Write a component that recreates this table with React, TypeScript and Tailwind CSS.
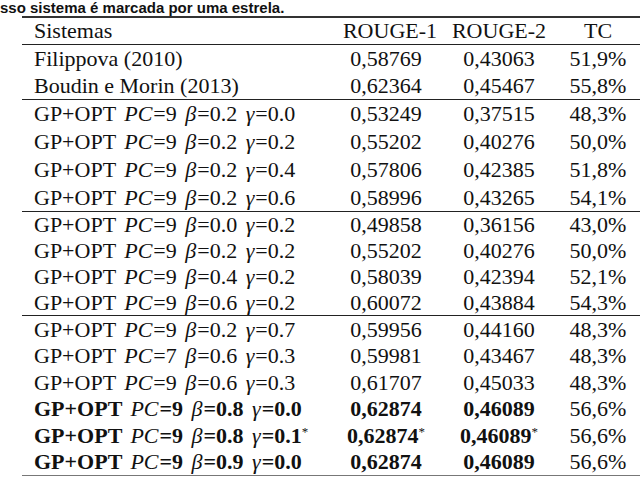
import React from "react";

type Cfg = { pc: string; b: string; g: string; bold?: boolean; star?: boolean };

const Star = () => (
  <span className="relative -top-[7px] text-[13px] font-normal leading-none">*</span>
);

const Sys = ({ pc, b, g, bold, star }: Cfg) => {
  const B = bold ? "font-bold" : "";
  return (
    <span className="whitespace-pre">
      <span className={B}>GP+OPT </span>
      <span className="italic font-normal ml-[3px] mr-[1px]">PC</span>
      <span className={B}>={pc} </span>
      <span className="italic font-normal ml-[3px] mr-[1px]">β</span>
      <span className={B}>={b} </span>
      <span className="italic font-normal ml-[3px] mr-[1px]">γ</span>
      <span className={B}>={g}</span>
      {star && <Star />}
    </span>
  );
};

type RowProps = {
  h: number;
  first: React.ReactNode;
  r1: string;
  r2: string;
  tc: string;
  bold?: boolean;
  star?: boolean;
};

const heightCls: Record<number, string> = {
  25: "h-[25px]",
  26: "h-[26px]",
  27: "h-[27px]",
  28: "h-[28px]",
};

const Row = ({ h, first, r1, r2, tc, bold, star }: RowProps) => (
  <div className={`flex items-center ${heightCls[h]}`}>
    <div className="w-[308px] pl-[12px] whitespace-nowrap">{first}</div>
    <div className={`w-[112px] text-center whitespace-nowrap ${bold ? "font-bold" : ""}`}>
      {r1}
      {star && <Star />}
    </div>
    <div className={`w-[114px] text-center whitespace-nowrap ${bold ? "font-bold" : ""}`}>
      {r2}
      {star && <Star />}
    </div>
    <div className="w-[84px] text-center whitespace-nowrap">{tc}</div>
  </div>
);

export default function App() {
  return (
    <div className="w-[640px] h-[477px] bg-white overflow-hidden text-[#111]">
      <div className="h-[16px] [font-family:Liberation_Sans,Arial,sans-serif] font-bold text-[15px] leading-[15px] whitespace-nowrap">
        sso sistema é marcada por uma estrela.
      </div>
      <div className="ml-[22px] w-[618px] [font-family:Liberation_Serif,Times_New_Roman,serif] text-[22px] leading-none">
        <div className="border-t-2 border-[#333]">
          <div className="flex items-center h-[26px]">
            <div className="w-[308px] pl-[12px]">Sistemas</div>
            <div className="w-[112px] text-center pl-[8px]">ROUGE-1</div>
            <div className="w-[114px] text-center">ROUGE-2</div>
            <div className="w-[84px] text-center">TC</div>
          </div>
        </div>
        <div className="border-t border-[#222]">
          <Row h={27} first="Filippova (2010)" r1="0,58769" r2="0,43063" tc="51,9%" />
          <Row h={27} first="Boudin e Morin (2013)" r1="0,62364" r2="0,45467" tc="55,8%" />
        </div>
        <div className="border-t border-[#222]">
          <Row h={28} first={<Sys pc="9" b="0.2" g="0.0" />} r1="0,53249" r2="0,37515" tc="48,3%" />
          <Row h={28} first={<Sys pc="9" b="0.2" g="0.2" />} r1="0,55202" r2="0,40276" tc="50,0%" />
          <Row h={28} first={<Sys pc="9" b="0.2" g="0.4" />} r1="0,57806" r2="0,42385" tc="51,8%" />
          <Row h={27} first={<Sys pc="9" b="0.2" g="0.6" />} r1="0,58996" r2="0,43265" tc="54,1%" />
        </div>
        <div className="border-t border-[#222]">
          <Row h={26} first={<Sys pc="9" b="0.0" g="0.2" />} r1="0,49858" r2="0,36156" tc="43,0%" />
          <Row h={26} first={<Sys pc="9" b="0.2" g="0.2" />} r1="0,55202" r2="0,40276" tc="50,0%" />
          <Row h={26} first={<Sys pc="9" b="0.4" g="0.2" />} r1="0,58039" r2="0,42394" tc="52,1%" />
          <Row h={25} first={<Sys pc="9" b="0.6" g="0.2" />} r1="0,60072" r2="0,43884" tc="54,3%" />
        </div>
        <div className="border-t border-b border-t-[#222] border-b-[#777]">
          <Row h={27} first={<Sys pc="9" b="0.2" g="0.7" />} r1="0,59956" r2="0,44160" tc="48,3%" />
          <Row h={26} first={<Sys pc="7" b="0.6" g="0.3" />} r1="0,59981" r2="0,43467" tc="48,3%" />
          <Row h={27} first={<Sys pc="9" b="0.6" g="0.3" />} r1="0,61707" r2="0,45033" tc="48,3%" />
          <Row h={26} first={<Sys pc="9" b="0.8" g="0.0" bold />} r1="0,62874" r2="0,46089" tc="56,6%" bold />
          <Row h={27} first={<Sys pc="9" b="0.8" g="0.1" bold star />} r1="0,62874" r2="0,46089" tc="56,6%" bold star />
          <Row h={26} first={<Sys pc="9" b="0.9" g="0.0" bold />} r1="0,62874" r2="0,46089" tc="56,6%" bold />
        </div>
      </div>
    </div>
  );
}
